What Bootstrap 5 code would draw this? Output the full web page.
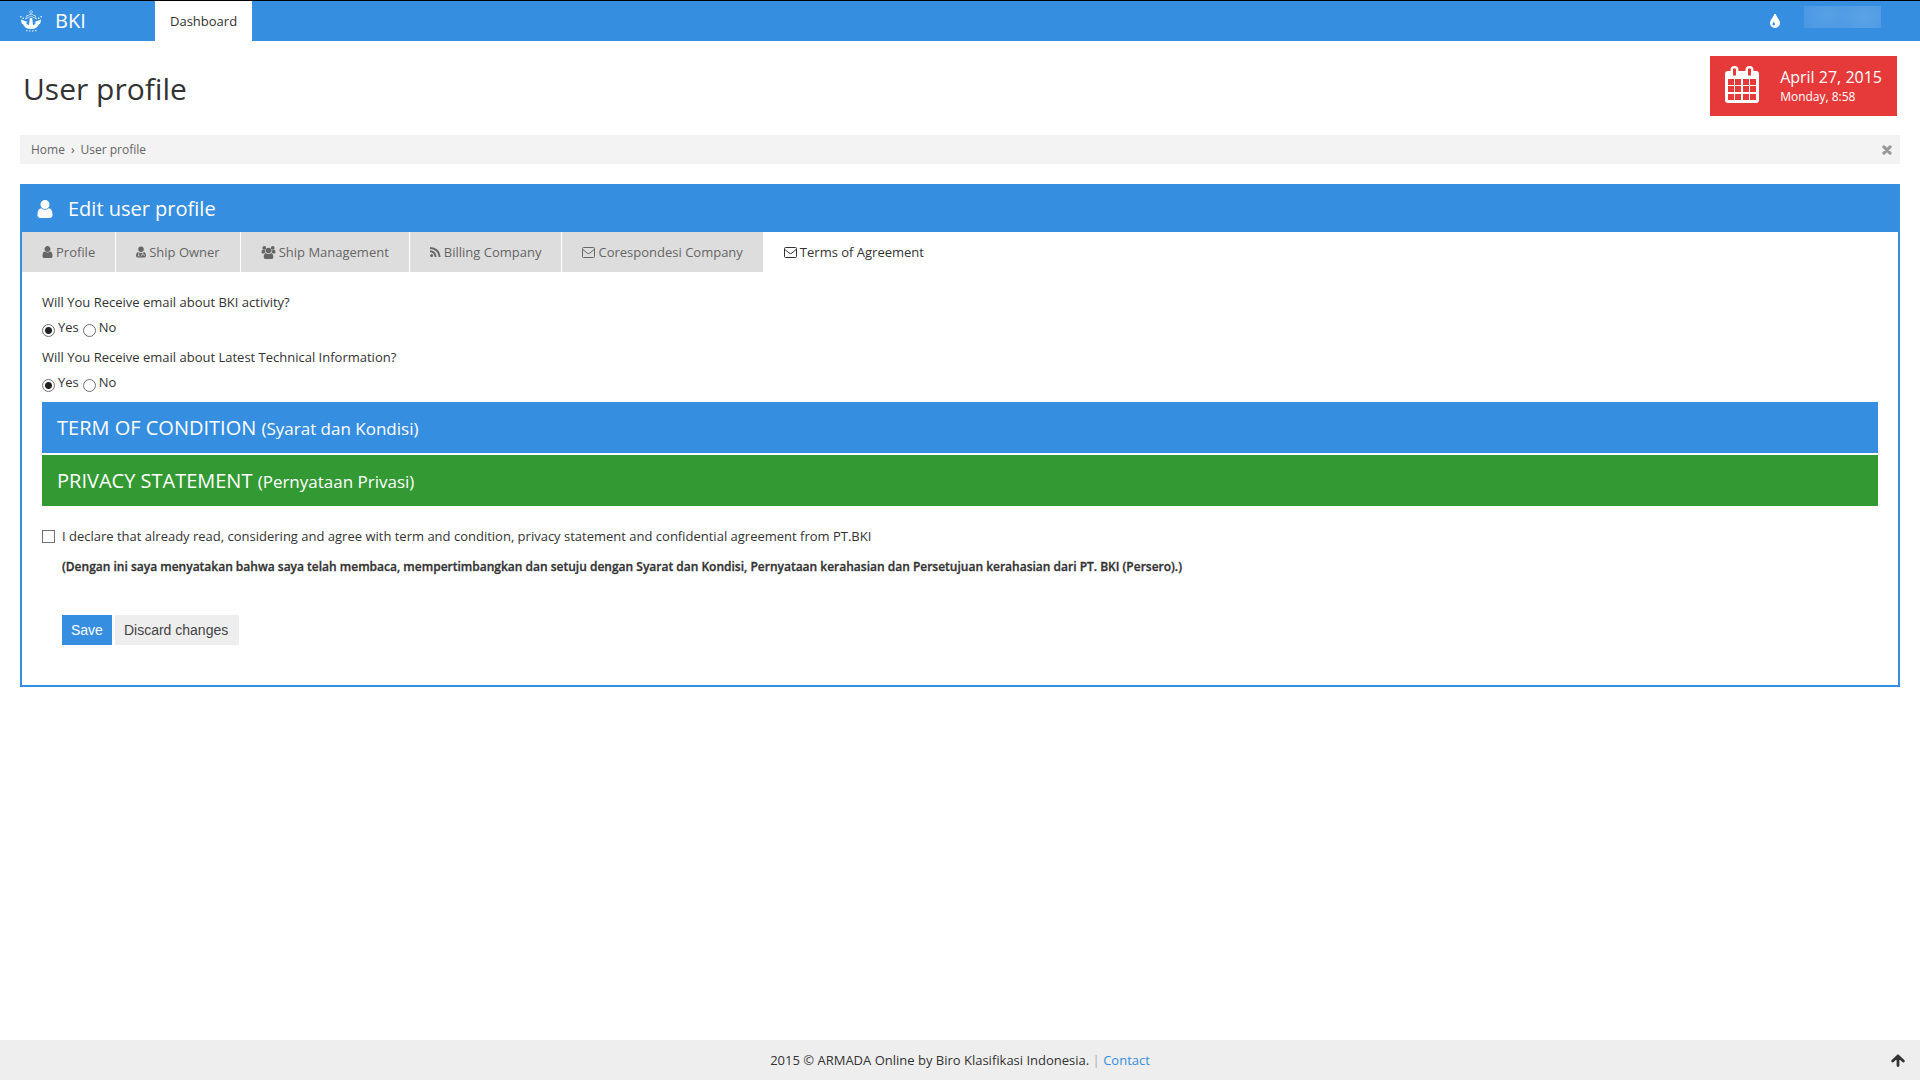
<!DOCTYPE html>
<html lang="en">
<head>
<meta charset="utf-8">
<meta name="viewport" content="width=device-width, initial-scale=1">
<title>BKI - User profile</title>
<link href="https://cdn.jsdelivr.net/npm/bootstrap@5.3.0/dist/css/bootstrap.min.css" rel="stylesheet">
<style>
  :root { --bki-blue: #368ee0; --bki-green: #339933; --bki-red: #e63a3a; }
  body { font-family: "Open Sans", "Noto Sans", sans-serif; font-size: 13px; line-height: 20px; color: #333; }
  svg { display: block; fill: currentColor; flex: none; }
  a { text-decoration: none; }
  .topbar { background: var(--bki-blue); border-top: 1px solid #000; padding: 0; height: 41px; }
  .brand-box { width: 155px; padding-left: 20px; font-size: 20px; gap: 13px; color: #fff; }
  .topbar .nav-link { padding: 10px 15px; background: #fff; color: #333; }
  .account { width: 77px; height: 22px; margin: 5px 39px 0 24px; background: radial-gradient(circle at 30% 40%, #56a0e5, transparent 45%), radial-gradient(circle at 78% 50%, #5ba3e6, transparent 45%), #4b98e3; }
  .page-title { font-size: 30px; line-height: 40px; font-weight: 400; margin: 0; padding: 13px 0 0 3px; }
  .page-head { padding: 15px 3px 19px 0; }
  .date-box { background: var(--bki-red); color: #fff; height: 60px; padding: 0 15px; gap: 21px; }
  .date-text { padding-top: 2px; }
  .date-day { font-size: 16px; line-height: 20px; }
  .date-time { font-size: 12px; line-height: 20px; }
  .date-box svg { margin-bottom: 3px; }
  .crumbs { background: #f3f3f3; padding: 0 8px 0 11px; height: 29px; font-size: 12px; }
  .crumbs a { color: #666; }
  .crumbs .breadcrumb { font-size: 12px; --bs-breadcrumb-item-padding-x: 6px; --bs-breadcrumb-divider: "›"; --bs-breadcrumb-divider-color: #555; }
  .crumbs button { color: #999; }
  .panel { border: 2px solid var(--bki-blue); margin-top: 20px; }
  .panel-head { background: var(--bki-blue); color: #fff; height: 46px; padding-left: 15px; gap: 15px; }
  .panel-head h2 { font-size: 20px; line-height: 30px; font-weight: 400; margin: 0; }
  .tabs { gap: 1px; }
  .tabs .nav-link { display: flex; align-items: center; gap: 3px; height: 40px; padding: 0 20px; background: #ddd; color: #666; }
  .tabs .nav-link.active { background: #fff; color: #333; }
  .panel-main { padding: 20px 20px 40px; }
  .question { margin: 0; padding: 0; border: 0; min-width: 0; height: 55px; }
  .question legend { font-size: 13px; line-height: 20px; margin: 0 0 5px; float: none; }
  .choice { gap: 3px; line-height: 20px; }
  .choice label { padding-right: 1px; }
  .pick { appearance: none; width: 13px; height: 13px; margin: 0; border: 1px solid #707070; background: #fff; flex: none; }
  .pick[type=radio] { border-radius: 50%; margin-top: 7px; }
  .pick[type=radio]:checked { background: radial-gradient(circle, #222 3px, #fff 4px); }
  .strip { height: 51px; padding: 1px 15px 0; color: #fff; font-size: 20px; line-height: 50px; border: 0; text-align: left; }
  .strip small { font-size: 17px; }
  .strip-blue { background: var(--bki-blue); }
  .strip-green { background: var(--bki-green); margin-top: 2px; }
  .agree { margin-top: 20px; gap: 7px; }
  .agree-note { margin: 11px 0 0 20px; font-size: 12px; font-weight: 550; -webkit-text-stroke: .3px #333; }
  .actions { margin: 38px 0 0 20px; gap: 3px; }
  .actions button { font-family: "Liberation Sans", sans-serif; font-size: 14px; line-height: 20px; padding: 5px 9px; border: 0; border-radius: 0; height: 30px; }
  .btn-save { background: var(--bki-blue); color: #fff; }
  .actions .btn-discard { background: #eee; color: #444; padding-right: 11px; }
  .site-foot { background: #eee; height: 40px; padding: 0 15px; }
  .site-foot a { color: var(--bki-blue); }
  .site-foot .to-top { color: #333; }
  .foot-text { padding-left: 14px; }
  .foot-sep { color: #aaa; }
</style>
<script defer src="https://cdn.jsdelivr.net/npm/bootstrap@5.3.0/dist/js/bootstrap.bundle.min.js"></script>
</head>
<body class="d-flex flex-column min-vh-100">

<svg width="0" height="0" class="d-none" aria-hidden="true">
  <symbol id="i-user" viewBox="0 128 1280 1536"><path d="M1280 1399q0 109-62.500 187t-150.500 78h-854q-88 0-150.500-78t-62.500-187q0-85 8.500-160.500t31.500-152 58.500-131 94-89 134.500-34.500q131 128 313 128t313-128q76 0 134.500 34.500t94 89 58.500 131 31.500 152 8.500 160.500zM1024 512q0 159-112.500 271.500t-271.500 112.500-271.500-112.500-112.500-271.500 112.500-271.500 271.500-112.500 271.500 112.500 112.500 271.500z"/></symbol>
  <symbol id="i-mail" viewBox="0 0 13 11"><path fill="none" stroke="currentColor" d="M1.500.5h10q1 0 1 1v8q0 1-1 1h-10q-1 0-1-1v-8q0-1 1-1zM.7 2.300 5 6q1.500 1.200 3 0l4.300-3.700"/></symbol>
</svg>

<header class="topbar d-flex align-items-stretch">
  <a href="#" class="brand-box d-flex align-items-center">
    <svg width="22" height="22" viewBox="0 0 22 22" aria-hidden="true">
      <circle cx="11" cy="2" r="1.400" fill="none" stroke="currentColor" stroke-width=".8" opacity=".7"/>
      <path fill="none" stroke="currentColor" stroke-width=".9" opacity=".7" d="M6.500 6l4.500-2 4.500 2M5.500 9l5.500-3 5.500 3M7.500 5l-2 4M14.500 5l2 4"/>
      <path d="M9.800 8h2.400l.8 7.300q2-.6 3-2.500l-1.500-.7 6.500-2.600q-.1 3.500-1.200 4.700l-.8-.3Q17.500 19 11 19T3 13.900l-.8.3Q1.100 13 1 9.500l6.500 2.600-1.500.7q1 1.900 3 2.500z"/>
      <path opacity=".75" d="M0 6h1.500v1.500H0zm20.500 0H22v1.500h-1.500zM2.500 7.500H4V9H2.500zM18 7.500h1.500V9H18zM6 20h1.500v1.300H6zm3 .3h1.500v1.300H9zm3 0h1.500v1.300H12zm3-.3h1.500v1.300H15z"/>
    </svg>
    <span>BKI</span>
  </a>
  <nav class="nav"><a class="nav-link" href="#">Dashboard</a></nav>
  <a href="#" class="ms-auto d-flex align-items-center text-white" aria-label="Theme colour">
    <svg width="10" height="14" viewBox="0 0 1024 1408"><path d="M512 1024q0-36-20-69-1-1-15.500-22.500t-25.500-38-25-44-21-50.500q-4-16-21-16t-21 16q-7 23-21 50.500t-25 44-25.500 38-15.500 22.500q-20 33-20 69 0 53 37.500 90.500t90.500 37.500 90.500-37.500 37.500-90.500zm512-128q0 212-150 362t-362 150-362-150-150-362q0-145 81-275 6-9 62.500-90.500t101-151 99.500-178 83-201.500q9-30 34-47t51-17 51.500 17 33.500 47q28 93 83 201.500t99.500 178 101 151 62.500 90.500q81 127 81 275z"/></svg>
  </a>
  <div class="account"></div>
</header>

<main class="flex-grow-1 px-3 mx-1">
  <div class="page-head d-flex justify-content-between align-items-start">
    <h1 class="page-title">User profile</h1>
    <div class="date-box d-flex align-items-center">
      <svg width="34" height="37" viewBox="0 0 34 37" aria-hidden="true">
        <path fill-rule="evenodd" d="M3 5h2.500V4a4 4 0 0 1 8 0v1h7V4a4 4 0 0 1 8 0v1H31q3 0 3 3v26q0 3-3 3H3q-3 0-3-3V8q0-3 3-3zM8 3v6.500h3V3q-1.500-1.400-3 0zm15 0v6.500h3V3q-1.500-1.400-3 0zM3 13v6h6v-6zm7 0v6h6v-6zm8 0v6h6v-6zm7 0v6h6v-6zM3 20v6h6v-6zm7 0v6h6v-6zm8 0v6h6v-6zm7 0v6h6v-6zM3 28v6h6v-6zm7 0v6h6v-6zm8 0v6h6v-6zm7 0v6h6v-6z"/>
      </svg>
      <div class="date-text">
        <div class="date-day">April 27, 2015</div>
        <div class="date-time">Monday, 8:58</div>
      </div>
    </div>
  </div>

  <nav class="crumbs d-flex justify-content-between align-items-center" aria-label="Breadcrumb">
    <ol class="breadcrumb mb-0">
      <li class="breadcrumb-item"><a href="#">Home</a></li>
      <li class="breadcrumb-item"><a href="#">User profile</a></li>
    </ol>
    <button type="button" class="border-0 bg-transparent p-0" aria-label="Close">
      <svg width="10" height="10" viewBox="0 0 10 10"><path stroke="currentColor" stroke-width="3.200" stroke-linecap="round" d="M1.900 1.900l6.200 6.200M8.100 1.900 1.900 8.100"/></svg>
    </button>
  </nav>

  <section class="panel">
    <div class="panel-head d-flex align-items-center">
      <svg width="16" height="18"><use href="#i-user"/></svg>
      <h2>Edit user profile</h2>
    </div>
    <nav class="nav tabs">
      <a class="nav-link" href="#"><svg width="11" height="12"><use href="#i-user"/></svg>Profile</a>
      <a class="nav-link" href="#"><svg width="10" height="12" viewBox="0 0 11 12"><circle cx="5.500" cy="3" r="3"/><path d="M2 6q3.500 2 7 0 2 1 2 4 0 2-1.600 2H1.600Q0 12 0 10q0-3 2-4z"/><path fill="none" stroke="#ddd" stroke-width=".8" d="M3 6.500V10M3 9.500l-1 1.500M3 9.500 4.500 11M7.500 6.500v1.700M6.200 10.500V9q1.500-1.600 2.800 0v1.500"/></svg>Ship Owner</a>
      <a class="nav-link" href="#"><svg width="15" height="13" viewBox="0 0 14 13"><circle cx="7" cy="4.500" r="2.800"/><path d="M4 7q3 2 6 0 1.800 1 1.800 4 0 2-1.500 2H3.700q-1.500 0-1.500-2 0-3 1.800-4z"/><circle cx="2.800" cy="1.900" r="1.900"/><circle cx="11.200" cy="1.900" r="1.900"/><path d="M0 6.500Q0 4 1 3.800q1.500.8 2.700.3Q3.500 6 4 6.300L2.500 7.500H1.300Q0 7.500 0 6.500zM14 6.500Q14 4 13 3.800q-1.500.8-2.700.3.200 1.900-.3 2.200l1.500 1.200h1.200q1.300 0 1.300-1z"/></svg>Ship Management</a>
      <a class="nav-link" href="#"><svg width="11" height="10" viewBox="0 0 11 10"><circle cx="1.600" cy="8.400" r="1.500"/><path fill="none" stroke="currentColor" stroke-width="1.900" d="M0 4.300q5 .2 5.600 5.700M0 1q8.800.4 9.600 9"/></svg>Billing Company</a>
      <a class="nav-link" href="#"><svg width="13" height="11"><use href="#i-mail"/></svg>Corespondesi Company</a>
      <a class="nav-link active" href="#" aria-current="page"><svg width="13" height="11"><use href="#i-mail"/></svg>Terms of Agreement</a>
    </nav>

    <form class="panel-main" onsubmit="return false">
      <fieldset class="question">
        <legend>Will You Receive email about BKI activity?</legend>
        <div class="choice d-flex align-items-start">
          <input class="pick" type="radio" name="activity" id="act-yes" checked><label for="act-yes">Yes</label>
          <input class="pick" type="radio" name="activity" id="act-no"><label for="act-no">No</label>
        </div>
      </fieldset>
      <fieldset class="question">
        <legend>Will You Receive email about Latest Technical Information?</legend>
        <div class="choice d-flex align-items-start">
          <input class="pick" type="radio" name="technical" id="tech-yes" checked><label for="tech-yes">Yes</label>
          <input class="pick" type="radio" name="technical" id="tech-no"><label for="tech-no">No</label>
        </div>
      </fieldset>

      <button type="button" class="strip strip-blue d-block w-100">TERM OF CONDITION <small>(Syarat dan Kondisi)</small></button>
      <button type="button" class="strip strip-green d-block w-100">PRIVACY STATEMENT <small>(Pernyataan Privasi)</small></button>

      <div class="agree d-flex align-items-center">
        <input class="pick" type="checkbox" id="agree">
        <label for="agree">I declare that already read, considering and agree with term and condition, privacy statement and confidential agreement from PT.BKI</label>
      </div>
      <p class="agree-note">(Dengan ini saya menyatakan bahwa saya telah membaca, mempertimbangkan dan setuju dengan Syarat dan Kondisi, Pernyataan kerahasian dan Persetujuan kerahasian dari PT. BKI (Persero).)</p>

      <div class="actions d-flex">
        <button type="submit" class="btn-save">Save</button>
        <button type="button" class="btn-discard">Discard changes</button>
      </div>
    </form>
  </section>
</main>

<footer class="site-foot d-flex align-items-center">
  <div class="foot-text flex-grow-1 text-center">2015 © ARMADA Online by Biro Klasifikasi Indonesia. <span class="foot-sep">|</span> <a href="#">Contact</a></div>
  <a href="#" class="to-top" aria-label="Back to top">
    <svg width="14" height="13" viewBox="0 0 14 13"><path fill="none" stroke="currentColor" stroke-width="2.800" stroke-linecap="round" stroke-linejoin="round" d="M7 2v9.600M1.700 7 7 1.900 12.300 7"/></svg>
  </a>
</footer>
</body>
</html>
